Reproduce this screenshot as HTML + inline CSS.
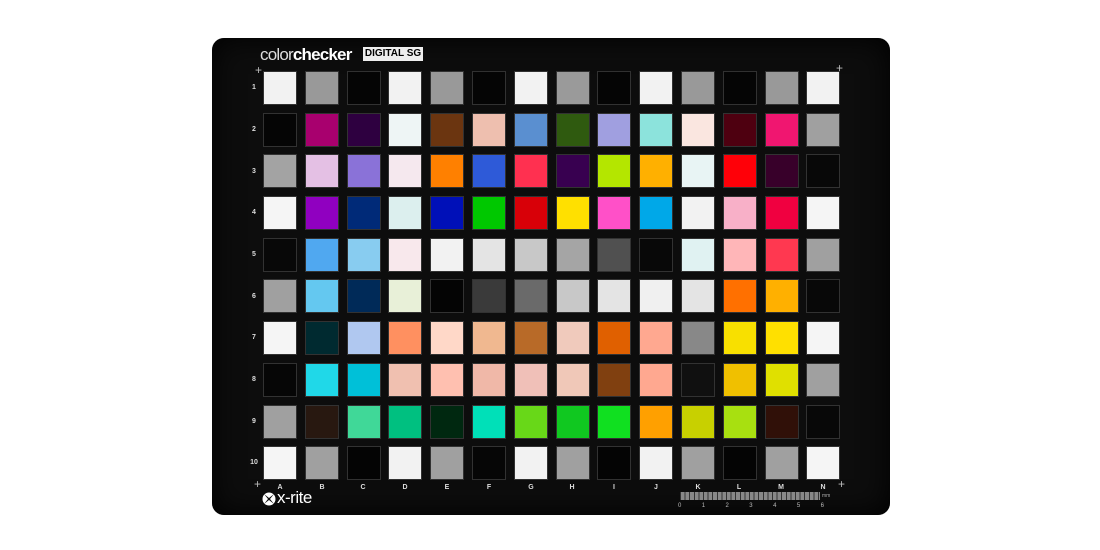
<!DOCTYPE html>
<html><head><meta charset="utf-8"><style>
body{margin:0;width:1100px;height:550px;background:#fff;position:relative;overflow:hidden;font-family:"Liberation Sans",sans-serif}
.board{position:absolute;left:212px;top:38px;width:678px;height:477px;background:#0d0d0d;border-radius:12px;box-shadow:inset 0 0 30px #000}
.grid{position:absolute;left:264px;top:72px;display:grid;grid-template-columns:repeat(14,32px);grid-auto-rows:32px;column-gap:9.8px;row-gap:9.7px}
.grid div{box-shadow:0 0 0 1px rgba(120,120,120,.35)}
.rl{position:absolute;left:248px;width:12px;text-align:center;color:#ddd;font-size:7px;font-weight:bold}
.cl{position:absolute;top:484px;width:32px;text-align:center;color:#ddd;font-size:7px;font-weight:bold}
.plus{position:absolute;color:#bbb;font-size:12px;line-height:12px}
</style></head><body>
<div class="board"></div>
<div style="position:absolute;left:260px;top:45px;font-size:17px;letter-spacing:-0.8px;color:#ddd;white-space:nowrap"><span style="font-weight:300">color</span><b style="color:#fff">checker</b></div>
<div style="position:absolute;left:363px;top:47px;width:60px;height:14px;background:#eee;color:#000;font-size:10px;font-weight:bold;text-align:center;line-height:14px">DIGITAL SG</div>
<div class="plus" style="left:255px;top:64px">+</div>
<div class="plus" style="left:836px;top:62px">+</div>
<div class="plus" style="left:254px;top:478px">+</div>
<div class="plus" style="left:838px;top:478px">+</div>
<div class="grid">
<div style="background:#f2f2f2"></div><div style="background:#999"></div><div style="background:#050505"></div><div style="background:#f2f2f2"></div><div style="background:#999"></div><div style="background:#050505"></div><div style="background:#f2f2f2"></div><div style="background:#9a9a9a"></div><div style="background:#050505"></div><div style="background:#f2f2f2"></div><div style="background:#999"></div><div style="background:#050505"></div><div style="background:#999"></div><div style="background:#f2f2f2"></div>
<div style="background:#050505"></div><div style="background:#a8006e"></div><div style="background:#2e0040"></div><div style="background:#eef5f5"></div><div style="background:#6b3510"></div><div style="background:#eebfaf"></div><div style="background:#5a8fd0"></div><div style="background:#2f5a0f"></div><div style="background:#a09fe0"></div><div style="background:#8ce3dc"></div><div style="background:#fae6e0"></div><div style="background:#4e0010"></div><div style="background:#f01670"></div><div style="background:#a0a0a0"></div>
<div style="background:#a3a3a3"></div><div style="background:#e4c0e4"></div><div style="background:#8a72d8"></div><div style="background:#f5e8ee"></div><div style="background:#ff8000"></div><div style="background:#2e5ad8"></div><div style="background:#ff3050"></div><div style="background:#380050"></div><div style="background:#b4e600"></div><div style="background:#ffb000"></div><div style="background:#e8f4f4"></div><div style="background:#ff0008"></div><div style="background:#38002a"></div><div style="background:#080808"></div>
<div style="background:#f5f5f5"></div><div style="background:#9000c0"></div><div style="background:#002a78"></div><div style="background:#dcefee"></div><div style="background:#0010b8"></div><div style="background:#00c800"></div><div style="background:#d80008"></div><div style="background:#ffe000"></div><div style="background:#ff50c8"></div><div style="background:#00a8e8"></div><div style="background:#f2f2f2"></div><div style="background:#f8b0c8"></div><div style="background:#f00040"></div><div style="background:#f5f5f5"></div>
<div style="background:#080808"></div><div style="background:#50a8f0"></div><div style="background:#88ccf0"></div><div style="background:#f8e8ec"></div><div style="background:#f2f2f2"></div><div style="background:#e4e4e4"></div><div style="background:#c8c8c8"></div><div style="background:#a5a5a5"></div><div style="background:#505050"></div><div style="background:#080808"></div><div style="background:#e0f2f2"></div><div style="background:#ffb6b8"></div><div style="background:#ff3850"></div><div style="background:#a0a0a0"></div>
<div style="background:#a0a0a0"></div><div style="background:#64c8f0"></div><div style="background:#002a58"></div><div style="background:#e8f0d8"></div><div style="background:#040404"></div><div style="background:#3a3a3a"></div><div style="background:#6a6a6a"></div><div style="background:#c8c8c8"></div><div style="background:#e4e4e4"></div><div style="background:#f0f0f0"></div><div style="background:#e4e4e4"></div><div style="background:#ff7000"></div><div style="background:#ffb000"></div><div style="background:#080808"></div>
<div style="background:#f5f5f5"></div><div style="background:#002a30"></div><div style="background:#b0c8f0"></div><div style="background:#ff9060"></div><div style="background:#ffd8c8"></div><div style="background:#f0b890"></div><div style="background:#b86a28"></div><div style="background:#f0cabc"></div><div style="background:#e06000"></div><div style="background:#ffa890"></div><div style="background:#888"></div><div style="background:#f8e000"></div><div style="background:#ffe000"></div><div style="background:#f5f5f5"></div>
<div style="background:#060606"></div><div style="background:#20d8e8"></div><div style="background:#00c0d8"></div><div style="background:#f0c0b0"></div><div style="background:#ffc0b0"></div><div style="background:#f0b8a8"></div><div style="background:#f0c0b8"></div><div style="background:#f0c8b8"></div><div style="background:#804010"></div><div style="background:#ffa890"></div><div style="background:#101010"></div><div style="background:#f0c000"></div><div style="background:#e0e000"></div><div style="background:#a0a0a0"></div>
<div style="background:#a0a0a0"></div><div style="background:#281810"></div><div style="background:#40d898"></div><div style="background:#00c080"></div><div style="background:#002810"></div><div style="background:#00e0b8"></div><div style="background:#68d818"></div><div style="background:#10c820"></div><div style="background:#10e020"></div><div style="background:#ffa000"></div><div style="background:#c8d000"></div><div style="background:#a8e010"></div><div style="background:#301008"></div><div style="background:#080808"></div>
<div style="background:#f5f5f5"></div><div style="background:#a0a0a0"></div><div style="background:#040404"></div><div style="background:#f2f2f2"></div><div style="background:#a0a0a0"></div><div style="background:#060606"></div><div style="background:#f2f2f2"></div><div style="background:#a0a0a0"></div><div style="background:#040404"></div><div style="background:#f2f2f2"></div><div style="background:#a0a0a0"></div><div style="background:#040404"></div><div style="background:#a0a0a0"></div><div style="background:#f5f5f5"></div>
</div>
<div class="rl" style="top:84px">1</div><div class="rl" style="top:126px">2</div><div class="rl" style="top:168px">3</div><div class="rl" style="top:209px">4</div><div class="rl" style="top:251px">5</div><div class="rl" style="top:293px">6</div><div class="rl" style="top:334px">7</div><div class="rl" style="top:376px">8</div><div class="rl" style="top:418px">9</div><div class="rl" style="top:459px">10</div>
<div class="cl" style="left:264px">A</div><div class="cl" style="left:306px">B</div><div class="cl" style="left:347px">C</div><div class="cl" style="left:389px">D</div><div class="cl" style="left:431px">E</div><div class="cl" style="left:473px">F</div><div class="cl" style="left:515px">G</div><div class="cl" style="left:556px">H</div><div class="cl" style="left:598px">I</div><div class="cl" style="left:640px">J</div><div class="cl" style="left:682px">K</div><div class="cl" style="left:723px">L</div><div class="cl" style="left:765px">M</div><div class="cl" style="left:807px">N</div>
<svg style="position:absolute;left:262px;top:492px" width="14" height="14" viewBox="0 0 14 14"><circle cx="7" cy="7" r="6.5" fill="#fff"/><path d="M2 2 L7 6 L12 2 L8 7 L12 12 L7 8 L2 12 L6 7Z" fill="#0d0d0d"/></svg>
<div style="position:absolute;left:277px;top:488px;color:#fff;font-size:17px;letter-spacing:-0.5px">x-rite</div>
<div style="position:absolute;left:680px;top:492px;width:140px;height:8px;background:#888;background-image:repeating-linear-gradient(90deg,#333 0 1px,transparent 1px 4.6px)"></div>
<div style="position:absolute;left:822px;top:493px;color:#aaa;font-size:5px">mm</div>
<div style="position:absolute;left:678px;top:503px;color:#bbb;font-size:6px;display:flex;justify-content:space-between;width:146px"><span>0</span><span>1</span><span>2</span><span>3</span><span>4</span><span>5</span><span>6</span></div>
</body></html>
